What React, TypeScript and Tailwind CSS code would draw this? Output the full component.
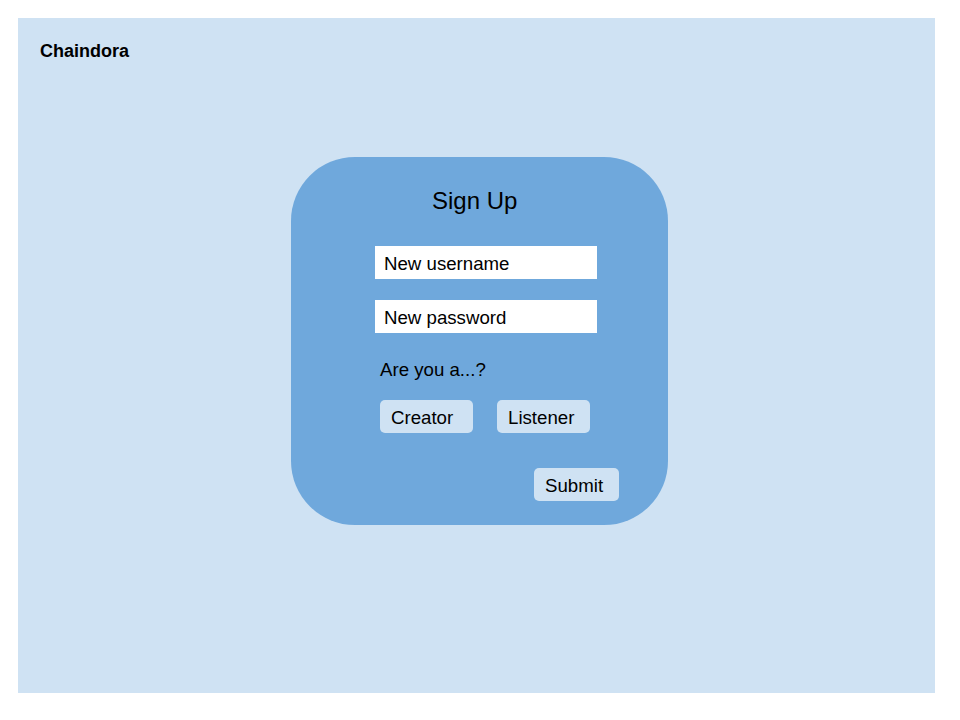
export default function App() {
  return (
    <div className="h-[720px] w-[960px] bg-white pl-[18px] pt-[18px] font-['Liberation_Sans',Arial,sans-serif] text-black">
      <div className="flex h-[675px] w-[917px] flex-col bg-[#cfe2f3]">
        <div className="pl-[22px] pt-[23px] text-[18px] font-bold leading-[21px]">Chaindora</div>

        <div className="ml-[273px] mt-[95px] flex h-[368px] w-[377px] flex-col rounded-[64px] bg-[#6fa8dc] pt-[30px]">
          <h1 className="pl-[141px] text-[24px] leading-[28px]">Sign Up</h1>

          <div className="ml-[84px] mt-[31px] flex h-[33px] w-[222px] items-center bg-white pl-[9px] pt-[1px] text-[18.67px] leading-[21px]">
            New username
          </div>
          <div className="ml-[84px] mt-[21px] flex h-[33px] w-[222px] items-center bg-white pl-[9px] pt-[1px] text-[18.67px] leading-[21px]">
            New password
          </div>

          <p className="ml-[89px] mt-[26px] text-[18.67px] leading-[21px]">Are you a...?</p>

          <div className="ml-[89px] mt-[20px] flex gap-[24px]">
            <button className="flex h-[33px] w-[93px] items-center rounded-[5px] bg-[#cfe2f3] pl-[11px] pt-[1px] text-[18.67px] leading-[21px]">
              Creator
            </button>
            <button className="flex h-[33px] w-[93px] items-center rounded-[5px] bg-[#cfe2f3] pl-[11px] pt-[1px] text-[18.67px] leading-[21px]">
              Listener
            </button>
          </div>

          <div className="ml-[243px] mt-[35px]">
            <button className="flex h-[33px] w-[85px] items-center rounded-[5px] bg-[#cfe2f3] pl-[11px] pt-[1px] text-[18.67px] leading-[21px]">
              Submit
            </button>
          </div>
        </div>
      </div>
    </div>
  )
}
